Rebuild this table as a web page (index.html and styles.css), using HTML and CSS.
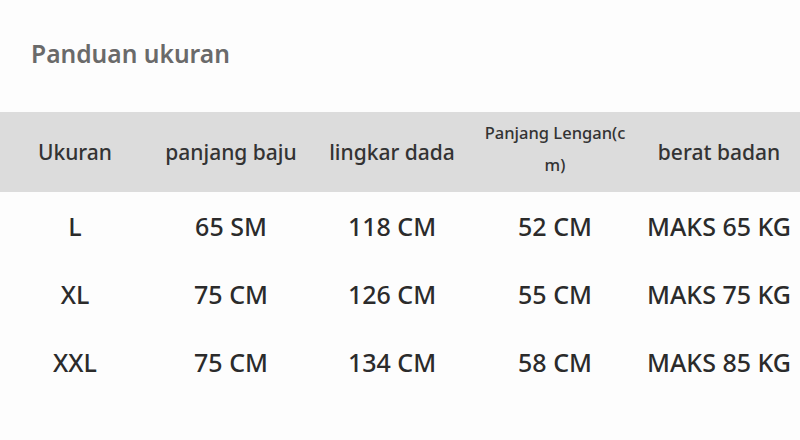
FILE: index.html
```html
<!DOCTYPE html>
<html>
<head>
<meta charset="utf-8">
<link rel="stylesheet" href="styles.css">
</head>
<body>
<div class="page">
  <h1 class="title">Panduan ukuran</h1>
  <div class="table">
    <div class="row head">
      <div class="cell">Ukuran</div>
      <div class="cell">panjang baju</div>
      <div class="cell">lingkar dada</div>
      <div class="cell small">Panjang Lengan(c<br>m)</div>
      <div class="cell">berat badan</div>
    </div>
    <div class="row">
      <div class="cell">L</div>
      <div class="cell">65 SM</div>
      <div class="cell">118 CM</div>
      <div class="cell">52 CM</div>
      <div class="cell">MAKS 65 KG</div>
    </div>
    <div class="row">
      <div class="cell">XL</div>
      <div class="cell">75 CM</div>
      <div class="cell">126 CM</div>
      <div class="cell">55 CM</div>
      <div class="cell">MAKS 75 KG</div>
    </div>
    <div class="row">
      <div class="cell">XXL</div>
      <div class="cell">75 CM</div>
      <div class="cell">134 CM</div>
      <div class="cell">58 CM</div>
      <div class="cell">MAKS 85 KG</div>
    </div>
  </div>
</div>
</body>
</html>
```
FILE: styles.css
```css
html, body {
  margin: 0;
  padding: 0;
  background: #fdfdfd;
}
.page {
  width: 800px;
  height: 440px;
  font-family: "Noto Sans", "Open Sans", sans-serif;
  overflow: hidden;
}
.title {
  margin: 0;
  padding: 37px 0 0 31px;
  height: 112px;
  box-sizing: border-box;
  font-size: 24.6px;
  font-weight: 600;
  color: #6a6a6a;
  line-height: 34px;
}
.table {
  display: flex;
  flex-direction: column;
}
.row {
  display: grid;
  grid-template-columns: 150px 162px 160px 166px 162px;
  height: 68px;
  align-items: center;
  color: #2b2b2b;
  font-size: 25px;
  font-weight: 500;
}
.row.head {
  height: 80px;
  background: #dcdcdc;
  color: #333333;
  font-size: 21px;
  font-weight: 500;
}
.cell {
  text-align: center;
  white-space: nowrap;
}
.cell.small {
  font-size: 16.5px;
  line-height: 32px;
  margin-top: -6px;
}
```
